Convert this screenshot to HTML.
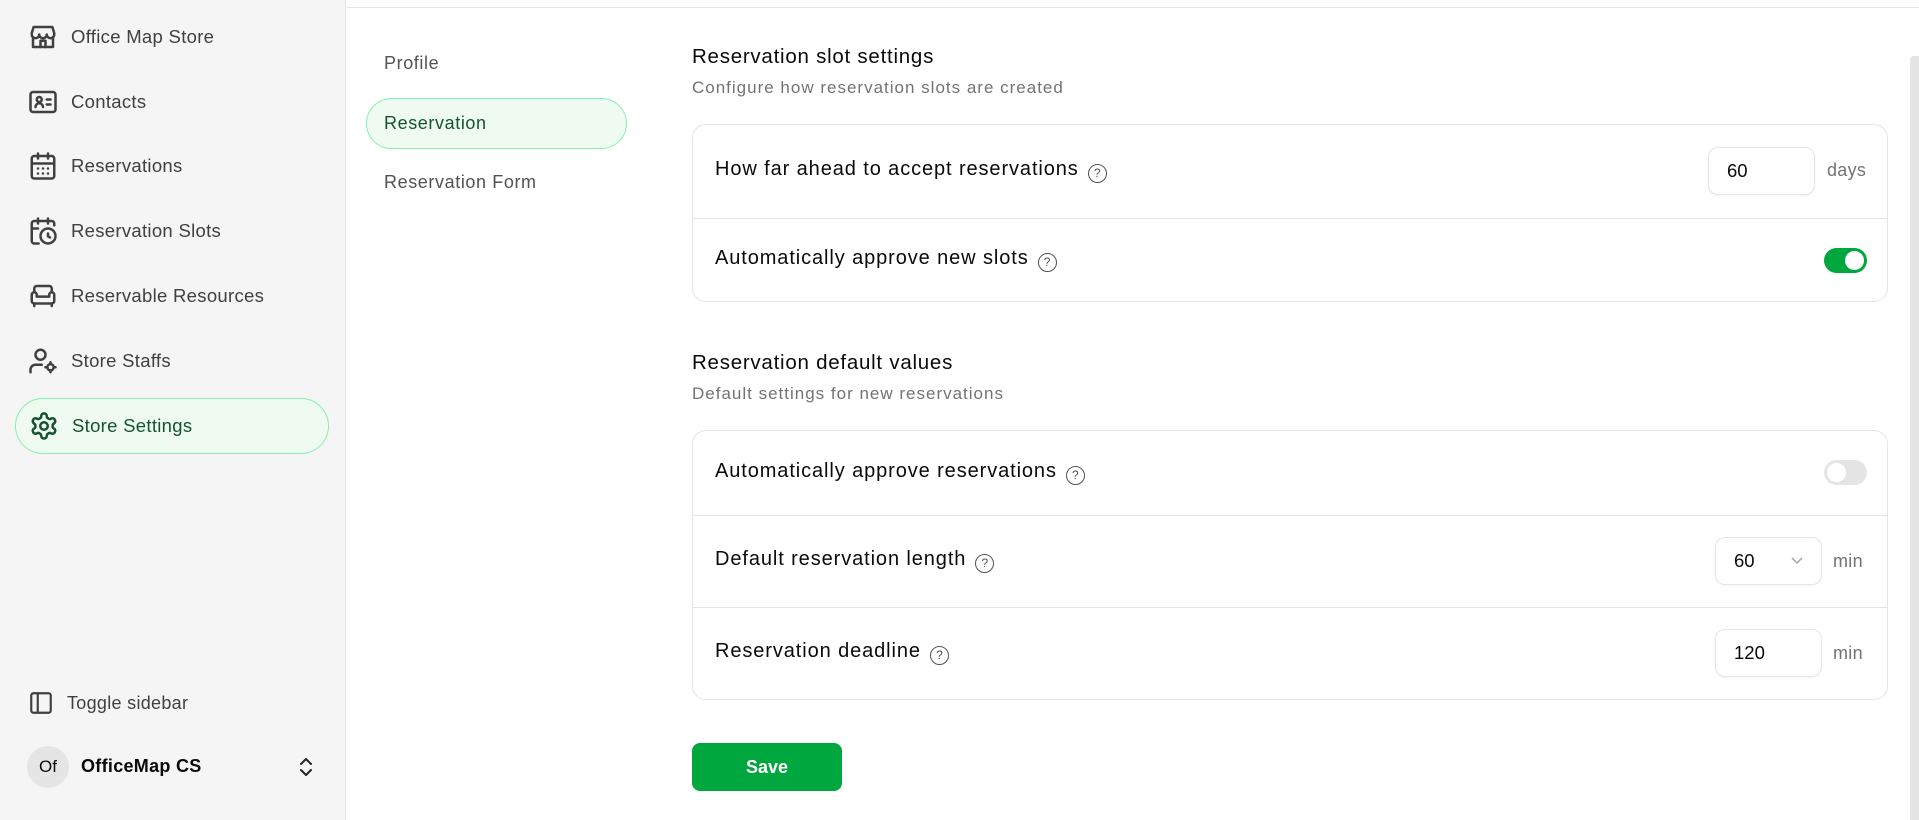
<!DOCTYPE html>
<html><head><meta charset="utf-8">
<style>
*{box-sizing:border-box;margin:0;padding:0}
body{width:1919px;height:820px;overflow:hidden;background:#fff;font-family:"Liberation Sans",sans-serif;color:#0a0a0a;position:relative}
.sb{position:absolute;left:0;top:0;width:346px;height:820px;background:#f5f5f5;border-right:1px solid #e5e5e5}
.item{position:absolute;left:15px;width:314px;height:56px;display:flex;align-items:center;padding-left:13px;font-size:18.5px;color:#404040;border-radius:28px;letter-spacing:0.3px}
.item svg{width:30px;height:30px;margin-right:13px;flex:none}
.item.act{background:#effbf1;border:1.5px solid #86efac;color:#14532d}
.topline{position:absolute;left:347px;top:7px;width:1572px;height:1px;background:#e5e5e5}
.sub{position:absolute;font-size:18px;color:#525252;letter-spacing:0.6px}
.subact{position:absolute;left:366px;top:98px;width:261px;height:51px;border-radius:26px;background:#effbf1;border:1.5px solid #86efac;color:#14532d;font-size:18px;padding-left:17px;display:flex;align-items:center;letter-spacing:0.6px}
.h{position:absolute;left:692px;font-size:20.5px;font-weight:500;color:#0a0a0a;letter-spacing:0.75px}
.d{position:absolute;left:692px;font-size:17px;color:#737373;letter-spacing:1px}
.card{position:absolute;left:692px;width:1196px;border:1px solid #e5e5e5;border-radius:14px}
.row{position:relative;border-top:1px solid #e5e5e5;display:flex;align-items:center;padding-left:22px;font-size:20px;font-weight:500;letter-spacing:0.9px}
.row .lbl{position:relative;top:-2px}
.row:first-child{border-top:none}
.q{display:inline-block;width:19px;height:19px;border:1.5px solid #525252;border-radius:50%;font-size:12px;text-align:center;line-height:16px;color:#525252;margin-left:9px;font-weight:400;letter-spacing:0;position:relative;top:2px}
.inp{position:absolute;width:107px;height:48px;border:1px solid #e5e5e5;border-radius:10px;font-size:18.5px;font-weight:400;padding-left:18px;display:flex;align-items:center;box-shadow:0 1px 2px rgba(0,0,0,.04);letter-spacing:0}
.unit{position:absolute;font-size:18px;color:#737373;font-weight:400;letter-spacing:0.3px}
.tg{position:absolute;width:43px;height:25px;border-radius:13px}
.tg::after{content:"";position:absolute;top:3px;width:19px;height:19px;border-radius:50%;background:#fff}
.on{background:#00a63e}.on::after{right:3px}
.off{background:#e5e5e5}.off::after{left:3px}
</style></head><body>
<div class="sb">
<div class="item" style="top:9px"><svg viewBox="0 0 24 24" fill="none" stroke="#404040" stroke-width="2" stroke-linecap="round" stroke-linejoin="round"><path d="M3 9l1.5-5h15L21 9v1a3 3 0 0 1-6 0 3 3 0 0 1-6 0 3 3 0 0 1-6 0z"/><path d="M4 12v8h16v-8"/><path d="M10 20v-5h4v5"/></svg>Office Map Store</div>
<div class="item" style="top:74px"><svg viewBox="0 0 24 24" fill="none" stroke="#404040" stroke-width="2" stroke-linecap="round" stroke-linejoin="round"><rect x="2" y="4" width="20" height="16" rx="2"/><circle cx="9" cy="10" r="2"/><path d="M6 16a3 3 0 0 1 6 0M15 10h3M15 14h3"/></svg>Contacts</div>
<div class="item" style="top:138px"><svg viewBox="0 0 24 24" fill="none" stroke="#404040" stroke-width="2" stroke-linecap="round"><rect x="3" y="4" width="18" height="18" rx="2"/><path d="M8 2v4M16 2v4M3 10h18M8 14h.01M12 14h.01M16 14h.01M8 18h.01M12 18h.01M16 18h.01"/></svg>Reservations</div>
<div class="item" style="top:203px"><svg viewBox="0 0 24 24" fill="none" stroke="#404040" stroke-width="2" stroke-linecap="round"><path d="M21 7.5V6a2 2 0 0 0-2-2H5a2 2 0 0 0-2 2v14a2 2 0 0 0 2 2h3.5M16 2v4M8 2v4M3 10h5"/><circle cx="16" cy="16" r="6"/><path d="M16 14v2.2l1.6 1"/></svg>Reservation Slots</div>
<div class="item" style="top:268px"><svg viewBox="0 0 24 24" fill="none" stroke="#404040" stroke-width="2" stroke-linecap="round" stroke-linejoin="round"><path d="M19 9V6a2 2 0 0 0-2-2H7a2 2 0 0 0-2 2v3"/><path d="M3 16a2 2 0 0 0 2 2h14a2 2 0 0 0 2-2v-5a2 2 0 0 0-4 0v1.5H7V11a2 2 0 0 0-4 0z"/><path d="M5 18v2M19 18v2"/></svg>Reservable Resources</div>
<div class="item" style="top:333px"><svg viewBox="0 0 24 24" fill="none" stroke="#404040" stroke-width="2" stroke-linecap="round"><circle cx="10" cy="7" r="4"/><path d="M2 21v-2a4 4 0 0 1 4-4h5"/><circle cx="18" cy="17" r="2.5"/><path d="M18 13v1.5M18 19.5V21M14 17h1.5M20.5 17H22"/></svg>Store Staffs</div>
<div class="item act" style="top:398px"><svg viewBox="0 0 24 24" fill="none" stroke="#14532d" stroke-width="2" stroke-linecap="round" stroke-linejoin="round"><path d="M12.22 2h-.44a2 2 0 0 0-2 2v.18a2 2 0 0 1-1 1.730l-.43.25a2 2 0 0 1-2 0l-.15-.08a2 2 0 0 0-2.73.73l-.22.38a2 2 0 0 0 .73 2.73l.15.1a2 2 0 0 1 1 1.72v.51a2 2 0 0 1-1 1.74l-.15.09a2 2 0 0 0-.73 2.73l.22.38a2 2 0 0 0 2.73.73l.15-.08a2 2 0 0 1 2 0l.43.25a2 2 0 0 1 1 1.73V20a2 2 0 0 0 2 2h.44a2 2 0 0 0 2-2v-.18a2 2 0 0 1 1-1.73l.43-.25a2 2 0 0 1 2 0l.15.08a2 2 0 0 0 2.73-.73l.22-.39a2 2 0 0 0-.73-2.730l-.15-.08a2 2 0 0 1-1-1.74v-.5a2 2 0 0 1 1-1.74l.15-.09a2 2 0 0 0 .73-2.73l-.22-.38a2 2 0 0 0-2.73-.73l-.15.08a2 2 0 0 1-2 0l-.43-.25a2 2 0 0 1-1-1.73V4a2 2 0 0 0-2-2z"/><circle cx="12" cy="12" r="3"/></svg>Store Settings</div>
<div class="item" style="top:675px;font-size:18px"><svg viewBox="0 0 24 24" fill="none" stroke="#404040" stroke-width="2" style="width:26px;height:26px;margin-right:13px"><rect x="3" y="3" width="18" height="18" rx="2"/><path d="M9 3v18"/></svg>Toggle sidebar</div>
<div style="position:absolute;left:27px;top:746px;width:42px;height:42px;border-radius:50%;background:#e5e5e5;font-size:17px;display:flex;align-items:center;justify-content:center">Of</div>
<div style="position:absolute;left:81px;top:756px;font-size:18px;font-weight:700;letter-spacing:0.3px">OfficeMap CS</div>
<svg style="position:absolute;left:298px;top:756px" width="16" height="22" viewBox="0 0 16 22" fill="none" stroke="#222" stroke-width="2" stroke-linecap="round" stroke-linejoin="round"><path d="M3 8l5-5 5 5M3 14l5 5 5-5"/></svg>
</div>
<div class="topline"></div>
<div class="sub" style="left:384px;top:53px">Profile</div>
<div class="subact">Reservation</div>
<div class="sub" style="left:384px;top:172px">Reservation Form</div>

<div class="h" style="top:45px">Reservation slot settings</div>
<div class="d" style="top:78px">Configure how reservation slots are created</div>
<div class="card" style="top:124px">
<div class="row" style="height:93px"><span class="lbl">How far ahead to accept reservations<span class="q">?</span></span>
<div class="inp" style="left:1015px;top:22px">60</div><div class="unit" style="left:1134px;top:35px">days</div></div>
<div class="row" style="height:83px"><span class="lbl">Automatically approve new slots<span class="q">?</span></span>
<div class="tg on" style="left:1131px;top:29px"></div></div>
</div>

<div class="h" style="top:351px">Reservation default values</div>
<div class="d" style="top:384px">Default settings for new reservations</div>
<div class="card" style="top:430px">
<div class="row" style="height:84px"><span class="lbl">Automatically approve reservations<span class="q">?</span></span>
<div class="tg off" style="left:1131px;top:29px"></div></div>
<div class="row" style="height:92px"><span class="lbl">Default reservation length<span class="q">?</span></span>
<div class="inp" style="left:1022px;top:21px">60<svg style="position:absolute;right:18px;top:19px" width="12" height="8" viewBox="0 0 12 8" fill="none" stroke="#a3a3a3" stroke-width="1.5"><path d="M1 1l5 5 5-5"/></svg></div><div class="unit" style="left:1140px;top:35px">min</div></div>
<div class="row" style="height:92px"><span class="lbl">Reservation deadline<span class="q">?</span></span>
<div class="inp" style="left:1022px;top:21px">120</div><div class="unit" style="left:1140px;top:35px">min</div></div>
</div>
<div style="position:absolute;left:692px;top:743px;width:150px;height:48px;border-radius:8px;background:#00a63e;color:#fff;font-size:18px;font-weight:700;display:flex;align-items:center;justify-content:center">Save</div>
<div style="position:absolute;left:1910px;top:56px;width:9px;height:764px;background:#e5e5e5;border-radius:4px 0 0 0"></div>
</body></html>
